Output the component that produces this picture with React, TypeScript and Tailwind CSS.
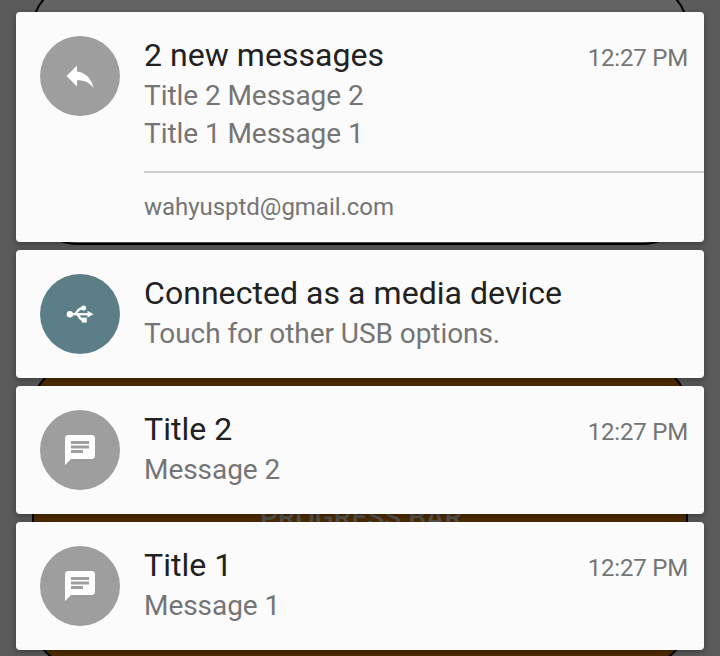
import type { ReactNode } from 'react';

const ReplyIcon = () => (
  <svg viewBox="0 0 24 24" className="size-9 fill-white">
    <path d="M10 9V5l-7 7 7 7v-4.1c5 0 8.5 1.6 11 5.1-1-5-4-10-11-11z" />
  </svg>
);

const ChatIcon = () => (
  <svg viewBox="0 0 24 24" className="size-9 fill-white">
    <path d="M20 2H4c-1.1 0-1.99.9-1.99 2L2 22l4-4h14c1.1 0 2-.9 2-2V4c0-1.1-.9-2-2-2zM6 9h12v2H6V9zm8 5H6v-2h8v2zm4-6H6V6h12v2z" />
  </svg>
);

const UsbIcon = () => (
  <svg viewBox="0 0 28 18" className="h-[18px] w-7">
    <g fill="none" stroke="white" strokeWidth="2.3">
      <path d="M4 9.2H23" />
      <path d="M8.5 9C12 8 10.5 3.6 17 3.2" />
      <path d="M11 9.6C14 10.5 12.5 14.8 18 15" />
    </g>
    <g fill="white">
      <circle cx="3.9" cy="9.2" r="3.2" />
      <path d="M21.5 5.8L27.4 9.2L21.5 12.6z" />
      <circle cx="17.6" cy="3" r="2.5" />
      <path d="M15.8 12.6h5v5h-5z" />
    </g>
  </svg>
);

function Card({
  icon,
  iconColor,
  title,
  time,
  lines,
  account,
}: {
  icon: ReactNode;
  iconColor: string;
  title: string;
  time?: string;
  lines: string[];
  account?: string;
}) {
  return (
    <article
      className={`relative flex shrink-0 rounded-[4px] bg-[#fbfbfb] pt-6 pl-6 shadow-[0_2px_6px_rgba(0,0,0,0.35)] ${account ? 'h-[230px]' : 'h-32'}`}
    >
      <div className={`flex size-20 shrink-0 items-center justify-center rounded-full ${iconColor}`}>{icon}</div>
      <div className="ml-6 flex-1">
        <div className="flex justify-between pr-4">
          <h2 className="text-[32px] leading-[38px] tracking-[0.05px] text-[#212121]">{title}</h2>
          {time && (
            <time className="-mb-px pt-1.5 text-2xl leading-8 tracking-[-0.2px] text-[#757575]">{time}</time>
          )}
        </div>
        <div className="pt-[3px] text-[28px] leading-[38px] tracking-[-0.06px] text-[#757575]">
          {lines.map((line) => (
            <p key={line}>{line}</p>
          ))}
        </div>
        {account && (
          <div className="mt-[18px] border-t-2 border-[#cfcfcf] pt-[18px] text-2xl leading-8 tracking-[-0.03px] text-[#757575]">
            {account}
          </div>
        )}
      </div>
    </article>
  );
}

export default function App() {
  return (
    <main className="relative h-[656px] w-[720px] overflow-hidden bg-[#5b5b5b] font-[Roboto,sans-serif]">
      <div className="absolute top-[-17px] left-8 h-[262px] w-[656px] rounded-[45px] border-2 border-black bg-[#636363]" />
      <div className="absolute top-[363px] left-8 flex h-[303px] w-[656px] items-center justify-center rounded-[45px] border-2 border-black bg-[#502d00] pt-[7px] pl-[2px] text-[28px] font-medium text-[#565451]">
        PROGRESS BAR
      </div>
      <div className="relative flex flex-col gap-2 px-4 pt-3">
        <Card
          icon={<ReplyIcon />}
          iconColor="bg-[#9e9e9e]"
          title="2 new messages"
          time="12:27 PM"
          lines={['Title 2 Message 2', 'Title 1 Message 1']}
          account="wahyusptd@gmail.com"
        />
        <Card
          icon={<UsbIcon />}
          iconColor="bg-[#5c7e87]"
          title="Connected as a media device"
          lines={['Touch for other USB options.']}
        />
        <Card icon={<ChatIcon />} iconColor="bg-[#9e9e9e]" title="Title 2" time="12:27 PM" lines={['Message 2']} />
        <Card icon={<ChatIcon />} iconColor="bg-[#9e9e9e]" title="Title 1" time="12:27 PM" lines={['Message 1']} />
      </div>
    </main>
  );
}
